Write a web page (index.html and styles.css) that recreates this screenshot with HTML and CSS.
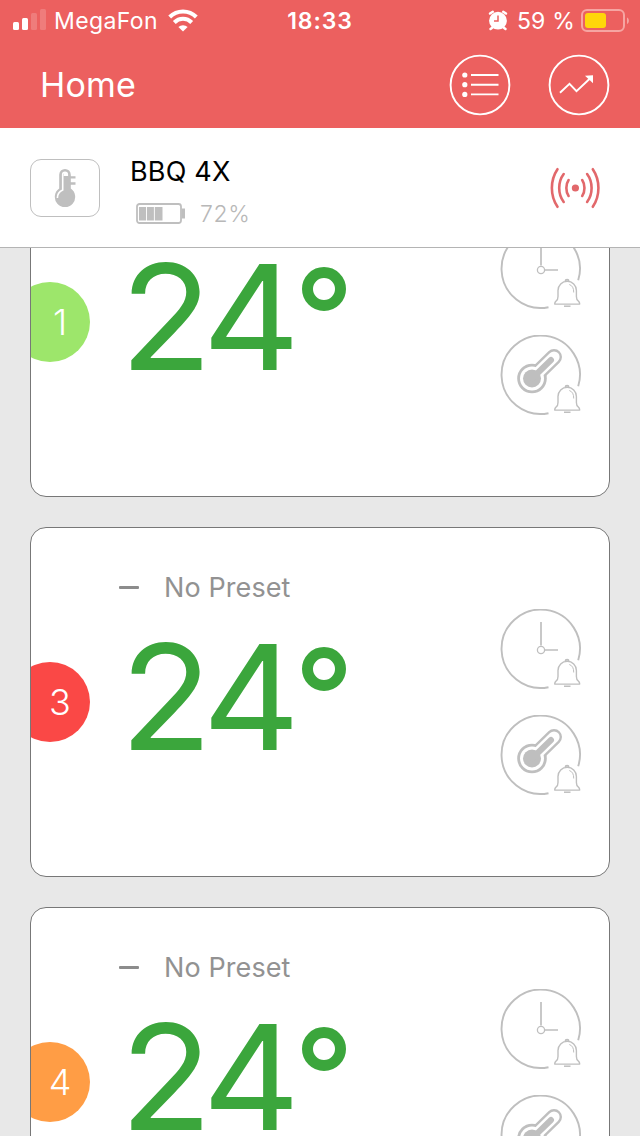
FILE: index.html
```html
<!DOCTYPE html>
<html lang="en">
<head>
<meta charset="utf-8">
<title>Home</title>
<link rel="stylesheet" href="styles.css">
</head>
<body>
<svg width="0" height="0" class="defs">
  <defs>
    <g id="ring" fill="none" stroke="#bfbfbf" stroke-width="1.9">
      <path d="M78.200 51.300A39.200 39.200 0 1 0 48.500 78.200"/>
    </g>
    <g id="bell" fill="none" stroke="#bfbfbf" stroke-width="1.400" stroke-linejoin="round">
      <path d="M65.300 52.300a1.800 1.800 0 0 1 3.600 0M58 67.500V61.500a9.200 9.200 0 0 1 18.400 0v6c0 2.500 .6 3.800 2 4.600q1.300 1 1.300 3H54.700q0-2 1.300-3c1.400-.8 2-2.100 2-4.600z"/>
      <path d="M69.300 55.500c3 1 4.500 3.600 4.400 8" stroke-width="1"/>
      <path d="M64 77.200h6.500" stroke-width="1.500"/>
    </g>
    <symbol id="timer" viewBox="0 0 84 84">
      <use href="#ring"/>
      <path d="M41 13v23.500M44.800 41H58" fill="none" stroke="#bfbfbf" stroke-width="1.700"/>
      <circle cx="41" cy="41" r="3.600" fill="none" stroke="#bfbfbf" stroke-width="1.300"/>
      <use href="#bell"/>
    </symbol>
    <symbol id="probe" viewBox="0 0 84 84">
      <use href="#ring"/>
      <path d="M32 43.500L54 22" stroke="#bfbfbf" stroke-width="16" stroke-linecap="round"/>
      <circle cx="32" cy="43.500" r="14.800" fill="#bfbfbf"/>
      <path d="M32 43.500L54 22" stroke="#fff" stroke-width="11.200" stroke-linecap="round"/>
      <circle cx="32" cy="43.500" r="12" fill="#fff"/>
      <circle cx="32" cy="43.500" r="9" fill="#bfbfbf"/>
      <path d="M32 43.500L51 25" stroke="#bfbfbf" stroke-width="6" stroke-linecap="round"/>
      <use href="#bell"/>
    </symbol>
  </defs>
</svg>
<div class="screen">
  <header class="top">
    <div class="status">
      <div class="carrier">
        <svg width="34" height="24" viewBox="0 0 34 24" fill="#fff">
          <rect x="0" y="13" width="6" height="8" rx="1.500"/>
          <rect x="9" y="9" width="6" height="12" rx="1.500"/>
          <rect x="18" y="4" width="6" height="17" rx="1.500" opacity=".18"/>
          <rect x="27" y="0" width="6" height="21" rx="1.500" opacity=".18"/>
        </svg>
        <span class="carrier-name">MegaFon</span>
        <svg width="30" height="24" viewBox="0 0 30 24" fill="none" stroke="#fff" stroke-width="4">
          <path d="M1.700 8a18.800 18.800 0 0 1 26.600 0M6.300 13.500a12.200 12.200 0 0 1 17.400 0"/>
          <path d="M15 22.500l-4.600-4.400a6.600 6.600 0 0 1 9.200 0z" fill="#fff" stroke="none"/>
        </svg>
      </div>
      <div class="clock">18:33</div>
      <div class="power">
        <svg width="20" height="22" viewBox="0 0 20 22">
          <g stroke="#fff" stroke-width="2.500" stroke-linecap="round"><path d="M2 3.500l2.800-1.700M18 3.500l-2.800-1.700M4.500 17.500l-2 1.500M15.500 17.500l2 1.500"/></g>
          <circle cx="10" cy="10.700" r="8.900" fill="#fff"/>
          <path d="M10 5.500V11H6" fill="none" stroke="#ec605f" stroke-width="1.500"/>
        </svg>
        <span class="percent">59 %</span>
        <svg width="49" height="24" viewBox="0 0 49 24">
          <rect x="1" y="1" width="42" height="21" rx="5" fill="none" stroke="#f6a5a2" stroke-width="2"/>
          <rect x="4" y="4" width="21" height="15" rx="3" fill="#ffd60a"/>
          <path d="M46 8.500c2.500 1 2.500 5.500 0 6.500z" fill="#f6a5a2"/>
        </svg>
      </div>
    </div>
    <div class="nav">
      <h1 class="title">Home</h1>
      <div class="nav-actions">
        <svg width="62" height="62" viewBox="0 0 62 62" fill="none" stroke="#fff" stroke-width="1.900">
          <circle cx="31" cy="31" r="29.400"/>
          <path d="M22 21h27.500M22 30.700h27.500M22 40.400h27.500"/>
          <g fill="#fff" stroke="none"><circle cx="15.800" cy="21" r="2.600"/><circle cx="15.800" cy="30.700" r="2.600"/><circle cx="15.800" cy="40.400" r="2.600"/></g>
        </svg>
        <svg width="62" height="62" viewBox="0 0 62 62" fill="none" stroke="#fff" stroke-width="1.900">
          <circle cx="31" cy="31" r="29.400"/>
          <path d="M12 38.800L21.500 29.800l7 7.400L42.500 24"/>
          <path d="M37 21.700l8-.5v8z" fill="#fff" stroke="none"/>
        </svg>
      </div>
    </div>
  </header>
  <section class="device">
    <div class="device-icon">
      <svg width="22" height="40" viewBox="0 0 22 40">
        <path d="M5.200 20.500V6.700a5.800 5.800 0 0 1 11.600 0V20.500a10.200 10.200 0 1 1-11.600 0z" fill="#bfbfbf"/>
        <path d="M13.300 8V6.500a2.300 2.300 0 0 0-4.600 0V22C5 23.800 3.300 26.300 3.400 30" fill="none" stroke="#fff" stroke-width="1.600"/>
        <path d="M10 5.300a1.800 1.800 0 0 1 3.300 1.500V8H9.500z" fill="#fff"/>
        <path d="M16 9.300h5.500M16 15.500h5.500" stroke="#bfbfbf" stroke-width="2.300"/>
      </svg>
    </div>
    <div class="device-info">
      <div class="device-name">BBQ 4X</div>
      <div class="device-battery">
        <svg width="49" height="22" viewBox="0 0 49 22">
          <rect x="1" y="1" width="44" height="19" rx="2.500" fill="none" stroke="#bfbfbf" stroke-width="1.800"/>
          <path d="M45.500 5.500H49v10h-3.500z" fill="#bfbfbf"/>
          <path d="M3 4h7v13.500H3zM10.900 4h7v13.500h-7zM18.800 4H26.500v13.500h-7.700z" fill="#bfbfbf"/>
        </svg>
        <span>72%</span>
      </div>
    </div>
    <svg width="50" height="42" viewBox="0 0 50 42" fill="none" stroke="#e2686b" stroke-width="2.600" stroke-linecap="round">
      <circle cx="25.400" cy="21" r="3.600" fill="#e2686b" stroke="none"/>
      <path d="M18.600 13c-3 4.300-3 11.700 0 16M32.200 13c3 4.300 3 11.700 0 16"/>
      <path d="M13.700 7c-6 8-6 20 0 28M37.100 7c6 8 6 20 0 28"/>
      <path d="M7.500 2.200c-7.500 11-7.500 26.600 0 37.600M42.800 2.200c7.500 11 7.500 26.600 0 37.600"/>
    </svg>
  </section>
  <main class="probes">
    <article class="card">
      <div class="badge green">1</div>
      <div class="reading">
        <div class="preset"><i class="dash"></i><span>No Preset</span></div>
        <div class="temp"><span class="value">24</span><i class="degree"></i></div>
      </div>
      <div class="alarms"><svg><use href="#timer"/></svg><svg><use href="#probe"/></svg></div>
    </article>
    <article class="card">
      <div class="badge red">3</div>
      <div class="reading">
        <div class="preset"><i class="dash"></i><span>No Preset</span></div>
        <div class="temp"><span class="value">24</span><i class="degree"></i></div>
      </div>
      <div class="alarms"><svg><use href="#timer"/></svg><svg><use href="#probe"/></svg></div>
    </article>
    <article class="card">
      <div class="badge orange">4</div>
      <div class="reading">
        <div class="preset"><i class="dash"></i><span>No Preset</span></div>
        <div class="temp"><span class="value">24</span><i class="degree"></i></div>
      </div>
      <div class="alarms"><svg><use href="#timer"/></svg><svg><use href="#probe"/></svg></div>
    </article>
  </main>
</div>
</body>
</html>
```
FILE: styles.css
```css
* { box-sizing: border-box; }
body { margin: 0; font-family: Inter, "Liberation Sans", sans-serif; }
svg { display: block; flex: none; }
.defs { position: absolute; }
.screen { width: 640px; height: 1136px; display: flex; flex-direction: column; overflow: hidden; background: #e8e8e8; }

.top { flex: none; height: 128px; background: #ec605f; color: #fff; }
.status { height: 41px; display: grid; grid-template-columns: 1fr auto 1fr; align-items: center; padding: 0 13px; }
.carrier { display: flex; align-items: center; }
.carrier-name { font-size: 23px; letter-spacing: 0.4px; margin: 0 10px 0 7px; }
.clock { font-size: 23px; font-weight: 600; letter-spacing: 0.9px; }
.power { display: flex; align-items: center; justify-content: flex-end; margin-right: -3px; }
.percent { font-size: 23px; letter-spacing: 0.2px; margin: 0 6px 0 9px; white-space: nowrap; }
.nav { height: 87px; display: flex; justify-content: space-between; align-items: center; padding: 0 30px 0 40px; }
.title { margin: 0; font-size: 34px; font-weight: 400; letter-spacing: 0.2px; }
.nav-actions { display: flex; gap: 37px; }

.device { flex: none; height: 120px; display: flex; align-items: center; padding: 0 40px 0 30px; background: #fff; border-bottom: 1px solid #b4b4b4; }
.device-icon { width: 70px; height: 58px; border: 1.5px solid #bfbfbf; border-radius: 11px; display: flex; align-items: center; justify-content: center; }
.device-info { flex: 1; padding: 9px 0 0 30px; }
.device-name { font-size: 27px; line-height: 34px; letter-spacing: 0.2px; color: #000; }
.device-battery { display: flex; align-items: center; gap: 15px; margin-top: 9px; padding-left: 6px; height: 32px; font-size: 23px; font-weight: 300; letter-spacing: 0.6px; color: #b8b8b8; }

.probes { flex: 1; min-height: 0; overflow: hidden; padding: 0 30px; }
.card { height: 350px; display: flex; background: #fff; border: 1px solid #777; border-radius: 16px; margin-bottom: 30px; overflow: hidden; }
.card:first-child { margin-top: -101px; }
.badge { flex: none; width: 80px; height: 80px; margin: 134px 0 0 -21px; border-radius: 50%; color: #fff; font-size: 36px; font-weight: 300; line-height: 80px; text-align: center; padding-left: 20px; }
.green { background: #9de66b; }
.red { background: #fa4846; }
.orange { background: #ff9d45; }
.reading { flex: 1; padding: 43px 0 0 29px; }
.preset { display: flex; align-items: center; height: 32px; gap: 25px; font-size: 27px; letter-spacing: 0.1px; color: #929292; }
.dash { width: 20px; height: 3px; border-radius: 1px; background: #8c8c8c; }
.temp { display: flex; align-items: flex-start; margin-top: 19px; padding-left: 1px; color: #3ba63c; }
.value { width: 182px; font-size: 146px; line-height: 150px; letter-spacing: -7px; transform: scaleX(1.035); transform-origin: left; }
.degree { width: 44px; height: 44px; margin-top: 25px; border: 11px solid #3ba63c; border-radius: 50%; }
.alarms { flex: none; width: 109px; padding-top: 81px; display: flex; flex-direction: column; gap: 22px; }
.alarms svg { width: 84px; height: 84px; }
```
